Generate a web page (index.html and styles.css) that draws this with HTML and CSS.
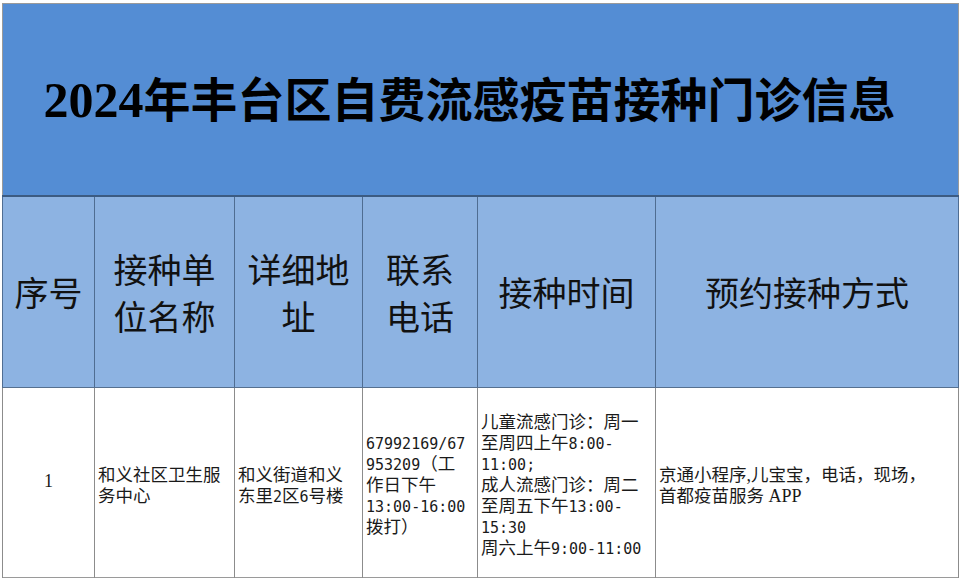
FILE: index.html
```html
<!DOCTYPE html>
<html lang="zh-CN">
<head>
<meta charset="utf-8">
<title>2024年丰台区自费流感疫苗接种门诊信息</title>
<link rel="stylesheet" href="styles.css">
</head>
<body>
<table class="sheet">
  <colgroup>
    <col class="c1"><col class="c2"><col class="c3"><col class="c4"><col class="c5"><col class="c6">
  </colgroup>
  <tr class="title-row">
    <td colspan="6" class="title"><span class="year">2024</span>年丰台区自费流感疫苗接种门诊信息</td>
  </tr>
  <tr class="head-row">
    <th>序号</th>
    <th>接种单<br>位名称</th>
    <th>详细地<br>址</th>
    <th>联系<br>电话</th>
    <th>接种时间</th>
    <th>预约接种方式</th>
  </tr>
  <tr class="data-row">
    <td class="idx">1</td>
    <td>
      <div class="ln">和义社区卫生服</div>
      <div class="ln">务中心</div>
    </td>
    <td>
      <div class="ln">和义街道和义</div>
      <div class="ln">东里<span class="num">2</span>区<span class="num">6</span>号楼</div>
    </td>
    <td>
      <div class="ln"><span class="num">67992169/67</span></div>
      <div class="ln"><span class="num">953209</span>（工</div>
      <div class="ln">作日下午</div>
      <div class="ln"><span class="num">13:00-16:00</span></div>
      <div class="ln">拨打）</div>
    </td>
    <td>
      <div class="ln">儿童流感门诊：周一</div>
      <div class="ln">至周四上午<span class="num">8:00-</span></div>
      <div class="ln"><span class="num">11:00;</span></div>
      <div class="ln">成人流感门诊：周二</div>
      <div class="ln">至周五下午<span class="num">13:00-</span></div>
      <div class="ln"><span class="num">15:30</span></div>
      <div class="ln">周六上午<span class="num">9:00-11:00</span></div>
    </td>
    <td>
      <div class="ln">京通小程序<span class="lat">,</span>儿宝宝，电话，现场，</div>
      <div class="ln">首都疫苗服务<span class="lat"> APP</span></div>
    </td>
  </tr>
</table>
</body>
</html>
```

FILE: styles.css
```css
html, body {
  margin: 0;
  padding: 0;
  background: #ffffff;
}

.sheet {
  margin: 3px 0 0 2px;
  width: 956px;
  border-collapse: collapse;
  table-layout: fixed;
  border: 1px solid #9a9a9a;
  font-family: "Noto Sans CJK SC", sans-serif;
  color: #111;
}

.c1 { width: 92px; }
.c2 { width: 140px; }
.c3 { width: 128px; }
.c4 { width: 115px; }
.c5 { width: 178px; }
.c6 { width: 303px; }

.title-row {
  height: 192px;
}

.title {
  background: #548dd4;
  text-align: center;
  vertical-align: middle;
  padding: 0 22px 0 0;
  font-family: "Noto Sans CJK SC", serif;
  font-weight: 700;
  font-size: 47px;
  line-height: 1;
  color: #000;
  border-bottom: 2px solid #3c5b82;
  white-space: nowrap;
}

.year {
  font-family: "Liberation Serif", serif;
  font-weight: 700;
  font-size: 50px;
}

.head-row {
  height: 192px;
}

.head-row th {
  background: #8db3e2;
  font-weight: 400;
  font-size: 34px;
  line-height: 47px;
  text-align: center;
  vertical-align: middle;
  padding: 0;
  color: #111;
  border-left: 1px solid #4f6d92;
  border-right: 1px solid #4f6d92;
  border-bottom: 1px solid #56708f;
  white-space: nowrap;
}

.data-row {
  height: 190px;
}

.data-row td {
  font-size: 17.5px;
  vertical-align: middle;
  padding: 2px 2px 0 3px;
  text-align: left;
  border-left: 1px solid #8c8c8c;
  border-right: 1px solid #8c8c8c;
  white-space: nowrap;
  color: #1a1a1a;
}

.ln {
  height: 21px;
  line-height: 21px;
}

.data-row td.idx {
  text-align: center;
  font-family: "Liberation Serif", serif;
  font-size: 18px;
  padding: 0 0 2px 0;
}

.num {
  font-family: "DejaVu Sans Mono", monospace;
  font-size: 15px;
}

.lat {
  font-family: "Liberation Serif", serif;
  font-size: 18px;
}
```
